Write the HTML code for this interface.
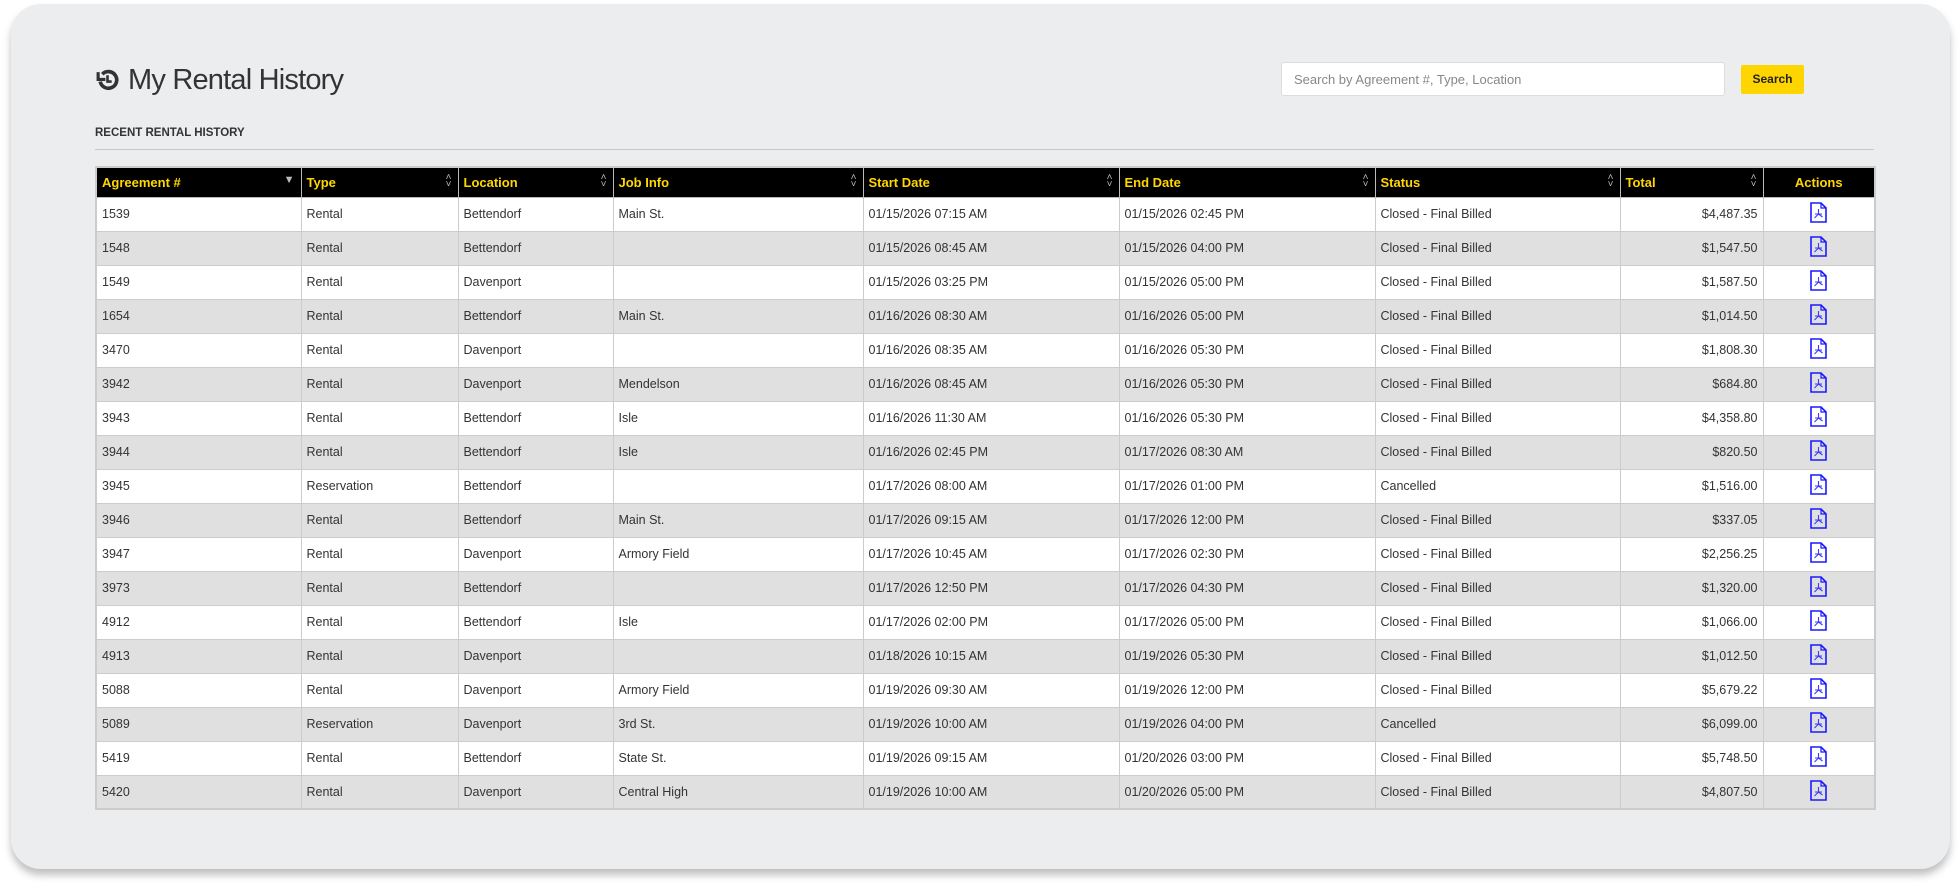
<!DOCTYPE html>
<html><head><style>
*{box-sizing:border-box;margin:0;padding:0}
body{width:1960px;height:889px;background:#fff;font-family:"Liberation Sans",sans-serif;position:relative;overflow:hidden}
.card{position:absolute;left:11px;top:4px;width:1939px;height:865px;background:#ecedef;border-radius:30px;box-shadow:0 6px 8px rgba(0,0,0,.25)}
h1{position:absolute;left:95px;top:64px;font-weight:normal;font-size:29px;color:#333;letter-spacing:-0.8px;display:flex;align-items:center}
h1 svg{margin-right:8px}
.search{position:absolute;left:1281px;top:62px;width:444px;height:34px;background:#fff;border:1px solid #ddd;border-radius:3px;font-size:13px;color:#888;padding:9px 12px}
.btn{position:absolute;left:1741px;top:65px;width:63px;height:29px;background:#ffd500;border-radius:2px;font-size:12px;font-weight:bold;color:#222;text-align:center;line-height:29px}
.sub{position:absolute;left:95px;top:127px;font-size:11.5px;font-weight:bold;color:#333}
.hr{position:absolute;left:95px;top:149px;width:1779px;height:1px;background:#c8c8c8}
table{position:absolute;left:95px;top:166px;width:1779px;border-collapse:collapse;font-size:12.5px;color:#333;table-layout:fixed;border:2px solid #ccc}
th{background:#000;color:#ffd700;text-align:left;font-size:13px;height:30px;padding:0 5px;border:1px solid #bbb;position:relative;text-shadow:1px 1px 0 #000}
th .s{position:absolute;right:6px;top:6px;color:#bbb;font-size:10px;line-height:7px;font-weight:normal}
td{height:34px;padding:0 5px;border:1px solid #ccc;white-space:nowrap}
tr:nth-child(even) td{background:#e0e0e0}
tr:nth-child(odd) td{background:#fff}
td.r{text-align:right}
td.c{text-align:center}
</style></head><body>
<div class="card"></div>
<h1><svg width="25" height="25" viewBox="0 0 24 24"><path d="M3 4v7h7" fill="none" stroke="#333" stroke-width="3"/><path d="M5 13a8 8 0 1 0 2-7" fill="none" stroke="#333" stroke-width="3.5"/><path d="M12 7v6h4" fill="none" stroke="#333" stroke-width="2.5"/></svg>My Rental History</h1>
<div class="search">Search by Agreement #, Type, Location</div>
<div class="btn">Search</div>
<div class="sub">RECENT RENTAL HISTORY</div>
<div class="hr"></div>
<table>
<colgroup><col style="width:205px"><col style="width:157px"><col style="width:155px"><col style="width:250px"><col style="width:256px"><col style="width:256px"><col style="width:245px"><col style="width:143px"><col style="width:112px"></colgroup>
<tr><th>Agreement #<span class="s" style="top:9px;font-size:11px">▼</span></th><th>Type<span class="s">˄<br>˅</span></th><th>Location<span class="s">˄<br>˅</span></th><th>Job Info<span class="s">˄<br>˅</span></th><th>Start Date<span class="s">˄<br>˅</span></th><th>End Date<span class="s">˄<br>˅</span></th><th>Status<span class="s">˄<br>˅</span></th><th>Total<span class="s">˄<br>˅</span></th><th style="text-align:center">Actions</th></tr>
<tbody id="b"></tbody>
</table>
<script>
var d=[["1539","Rental","Bettendorf","Main St.","01/15/2026 07:15 AM","01/15/2026 02:45 PM","Closed - Final Billed","$4,487.35"],
["1548","Rental","Bettendorf","","01/15/2026 08:45 AM","01/15/2026 04:00 PM","Closed - Final Billed","$1,547.50"],
["1549","Rental","Davenport","","01/15/2026 03:25 PM","01/15/2026 05:00 PM","Closed - Final Billed","$1,587.50"],
["1654","Rental","Bettendorf","Main St.","01/16/2026 08:30 AM","01/16/2026 05:00 PM","Closed - Final Billed","$1,014.50"],
["3470","Rental","Davenport","","01/16/2026 08:35 AM","01/16/2026 05:30 PM","Closed - Final Billed","$1,808.30"],
["3942","Rental","Davenport","Mendelson","01/16/2026 08:45 AM","01/16/2026 05:30 PM","Closed - Final Billed","$684.80"],
["3943","Rental","Bettendorf","Isle","01/16/2026 11:30 AM","01/16/2026 05:30 PM","Closed - Final Billed","$4,358.80"],
["3944","Rental","Bettendorf","Isle","01/16/2026 02:45 PM","01/17/2026 08:30 AM","Closed - Final Billed","$820.50"],
["3945","Reservation","Bettendorf","","01/17/2026 08:00 AM","01/17/2026 01:00 PM","Cancelled","$1,516.00"],
["3946","Rental","Bettendorf","Main St.","01/17/2026 09:15 AM","01/17/2026 12:00 PM","Closed - Final Billed","$337.05"],
["3947","Rental","Davenport","Armory Field","01/17/2026 10:45 AM","01/17/2026 02:30 PM","Closed - Final Billed","$2,256.25"],
["3973","Rental","Bettendorf","","01/17/2026 12:50 PM","01/17/2026 04:30 PM","Closed - Final Billed","$1,320.00"],
["4912","Rental","Bettendorf","Isle","01/17/2026 02:00 PM","01/17/2026 05:00 PM","Closed - Final Billed","$1,066.00"],
["4913","Rental","Davenport","","01/18/2026 10:15 AM","01/19/2026 05:30 PM","Closed - Final Billed","$1,012.50"],
["5088","Rental","Davenport","Armory Field","01/19/2026 09:30 AM","01/19/2026 12:00 PM","Closed - Final Billed","$5,679.22"],
["5089","Reservation","Davenport","3rd St.","01/19/2026 10:00 AM","01/19/2026 04:00 PM","Cancelled","$6,099.00"],
["5419","Rental","Bettendorf","State St.","01/19/2026 09:15 AM","01/20/2026 03:00 PM","Closed - Final Billed","$5,748.50"],
["5420","Rental","Davenport","Central High","01/19/2026 10:00 AM","01/20/2026 05:00 PM","Closed - Final Billed","$4,807.50"]];
var ic='<svg width="17" height="21" viewBox="0 0 17 21"><path d="M1 1h10l5 5v14H1z" fill="none" stroke="#1a1aff" stroke-width="1.6"/><path d="M11 1v5h5" fill="none" stroke="#1a1aff" stroke-width="1.2"/><path d="M8.5 7v5l-4 4M8.5 12l4 3M5 12h7" fill="none" stroke="#3a3aff" stroke-width="1.1"/></svg>';
var h='';d.forEach(function(r){h+='<tr>';for(var i=0;i<7;i++)h+='<td>'+r[i]+'</td>';h+='<td class="r">'+r[7]+'</td><td class="c">'+ic+'</td></tr>';});
document.getElementById('b').innerHTML=h;
</script>
</body></html>
